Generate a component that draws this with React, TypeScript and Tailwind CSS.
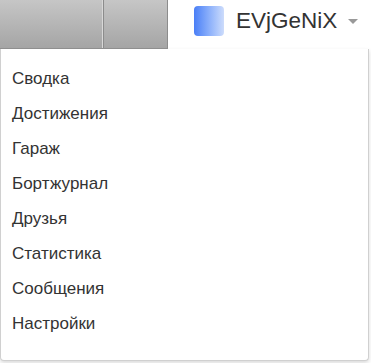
import React from "react";

const items = [
  "Сводка",
  "Достижения",
  "Гараж",
  "Бортжурнал",
  "Друзья",
  "Статистика",
  "Сообщения",
  "Настройки",
];

export default function App() {
  return (
    <div
      className="w-[371px] h-[363px] bg-white relative overflow-hidden"
      style={{ fontFamily: '"Liberation Sans", Arial, sans-serif' }}
    >
      <div className="flex h-[49px]">
        <div className="flex w-[168px] h-[49px] border-b border-[#8f8f8f]">
          <div className="w-[103px] h-full bg-gradient-to-b from-[#c6c6c6] to-[#a5a5a5] border-r border-[#d8d8d8]" />
          <div className="w-[1px] h-full bg-[#8c8c8c]" />
          <div className="flex-1 h-full bg-gradient-to-b from-[#c6c6c6] to-[#a5a5a5] border-r border-[#8c8c8c]" />
        </div>
        <div className="flex items-start pl-[26px] pt-[6px]">
          <div className="w-[30px] h-[30px] rounded-[4px] bg-gradient-to-r from-[#4a7ef6] to-[#cddcfb]" />
          <span className="ml-[12px] text-[22.5px] leading-[30px] text-[#333]">EVjGeNiX</span>
          <div className="ml-[11px] mt-[13px] w-0 h-0 border-l-[5px] border-r-[5px] border-t-[5px] border-l-transparent border-r-transparent border-t-[#999]" />
        </div>
      </div>
      <div className="w-[369px] h-[312px] bg-white rounded-b-[4px] border border-t-0 border-[#d0d0d0] shadow-[0_2px_4px_rgba(0,0,0,0.15)] pt-[12px]">
        {items.map((t) => (
          <div key={t} className="h-[35px] flex items-center pl-[11px] text-[17px] text-[#333]">
            {t}
          </div>
        ))}
      </div>
    </div>
  );
}
